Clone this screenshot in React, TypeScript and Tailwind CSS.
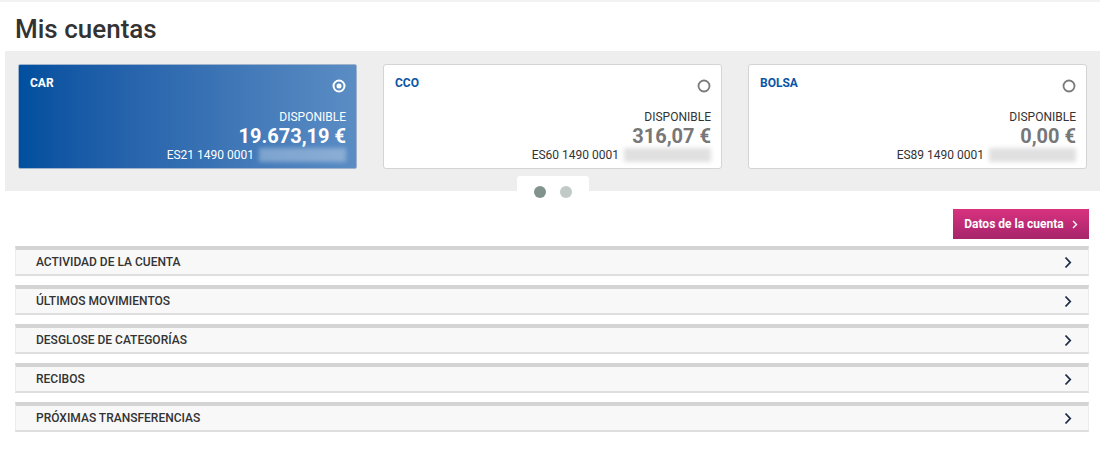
import React from "react";

const cards = [
  { name: "CAR", amount: "19.673,19 €", iban: "ES21 1490 0001", active: true },
  { name: "CCO", amount: "316,07 €", iban: "ES60 1490 0001", active: false },
  { name: "BOLSA", amount: "0,00 €", iban: "ES89 1490 0001", active: false },
];

const rows = ["ACTIVIDAD DE LA CUENTA", "ÚLTIMOS MOVIMIENTOS", "DESGLOSE DE CATEGORÍAS", "RECIBOS", "PRÓXIMAS TRANSFERENCIAS"];

function Radio({ active }: { active: boolean }) {
  return active ? (
    <svg width="14" height="14" viewBox="0 0 14 14">
      <circle cx="7" cy="7" r="5.5" fill="none" stroke="#ffffff" strokeWidth="2" />
      <circle cx="7" cy="7" r="2.5" fill="#ffffff" />
    </svg>
  ) : (
    <svg width="14" height="14" viewBox="0 0 14 14">
      <circle cx="7" cy="7" r="5.5" fill="none" stroke="#7a7a7a" strokeWidth="1.8" />
    </svg>
  );
}

export default function App() {
  return (
    <div className="w-[1100px] h-[454px] bg-white border-t-2 border-[#f2f2f2] overflow-hidden" style={{ fontFamily: "Roboto, 'Liberation Sans', sans-serif" }}>
      <h1 className="pl-[15px] pt-[12px] h-[49px] text-[26px] leading-[30px] font-medium text-[#333333]">Mis cuentas</h1>
      <div className="ml-[5px] bg-[#eeeeee] pt-[13px] px-[13px]">
        <div className="grid grid-cols-3 gap-[26px]">
          {cards.map((c) => (
            <div
              key={c.name}
              className={
                c.active
                  ? "h-[105px] rounded-[2px] border border-[#9fb3cc] bg-gradient-to-r from-[#004f9f] to-[#5b8dc4] pl-[11px] pr-[10px] pt-[10px] text-white"
                  : "h-[105px] rounded-[3px] border border-[#d4d4d4] bg-white pl-[11px] pr-[10px] pt-[10px] text-[#333333]"
              }
            >
              <div className="flex items-start justify-between h-[34px]">
                <span className={c.active ? "text-[12px] font-bold leading-[16px] text-white" : "text-[12px] font-bold leading-[16px] text-[#0a55a6]"}>{c.name}</span>
                <span className="mt-[4px]"><Radio active={c.active} /></span>
              </div>
              <div className="flex flex-col items-end">
                <span className="text-[12px] leading-[16px]">DISPONIBLE</span>
                <span className={c.active ? "text-[20px] font-bold leading-[22px] text-white" : "text-[20px] font-bold leading-[22px] text-[#777777]"}>{c.amount}</span>
                <span className="flex items-center gap-[5px] text-[12px] leading-[16px]">
                  <span>{c.iban}</span>
                  <span className={c.active ? "inline-block w-[87px] h-[14px] bg-white/30 blur-[2px]" : "inline-block w-[87px] h-[14px] bg-[#e0e0e0] blur-[2px]"}></span>
                </span>
              </div>
            </div>
          ))}
        </div>
        <div className="flex justify-center pt-[7px] pl-[1px]">
          <div className="relative w-[72px] h-[15px] bg-white rounded-t-[3px]">
            <span className="absolute left-[17px] top-[10px] w-[12px] h-[12px] rounded-full bg-[#80948d]"></span>
            <span className="absolute left-[43px] top-[10px] w-[12px] h-[12px] rounded-full bg-[#c2cac7]"></span>
          </div>
        </div>
      </div>
      <div className="pl-[15px] pr-[11px]">
        <div className="flex justify-end pt-[18px]">
          <button className="h-[30px] w-[136px] flex items-center justify-center gap-[8px] bg-gradient-to-b from-[#d9327f] to-[#a6246b] text-white text-[12px] font-bold">
            <span>Datos de la cuenta</span>
            <svg width="6" height="9" viewBox="0 0 6 9"><path d="M1 1 L4.5 4.5 L1 8" fill="none" stroke="#ffffff" strokeWidth="1.4" /></svg>
          </button>
        </div>
        <div className="flex flex-col gap-[9px] pt-[7px]">
          {rows.map((r) => (
            <div key={r} className="h-[30px] border-t-[4px] border-b-[2px] border-t-[#d4d4d4] border-b-[#dedede] border-x border-x-[#ececec] bg-[#f8f8f8] flex items-center justify-between pl-[20px] pr-[16px]">
              <span className="text-[12px] font-medium text-[#333333] leading-[14px]">{r}</span>
              <svg width="8" height="13" viewBox="0 0 8 13"><path d="M1.5 1.5 L6.2 6.5 L1.5 11.5" fill="none" stroke="#1c2b48" strokeWidth="1.8" /></svg>
            </div>
          ))}
        </div>
      </div>
    </div>
  );
}
